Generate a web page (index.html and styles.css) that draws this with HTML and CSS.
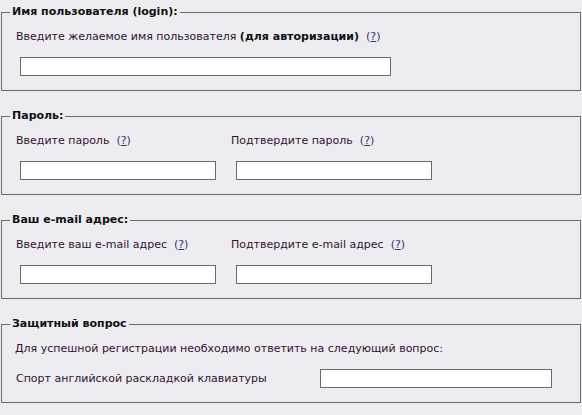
FILE: index.html
```html
<!DOCTYPE html>
<html lang="ru">
<head>
<meta charset="utf-8">
<title>Регистрация</title>
<link rel="stylesheet" href="styles.css">
</head>
<body>
<form class="form">
  <fieldset class="group">
    <legend class="legend">Имя пользователя (login):</legend>
    <div class="label">Введите желаемое имя пользователя <b>(для авторизации)</b><span class="help">(<u>?</u>)</span></div>
    <input class="field field-wide" type="text">
  </fieldset>

  <fieldset class="group">
    <legend class="legend">Пароль:</legend>
    <div class="cols">
      <div class="col">
        <div class="label">Введите пароль<span class="help">(<u>?</u>)</span></div>
        <input class="field field-half" type="password">
      </div>
      <div class="col">
        <div class="label">Подтвердите пароль<span class="help">(<u>?</u>)</span></div>
        <input class="field field-half" type="password">
      </div>
    </div>
  </fieldset>

  <fieldset class="group">
    <legend class="legend">Ваш e-mail адрес:</legend>
    <div class="cols">
      <div class="col">
        <div class="label">Введите ваш e-mail адрес<span class="help">(<u>?</u>)</span></div>
        <input class="field field-half" type="text">
      </div>
      <div class="col">
        <div class="label">Подтвердите e-mail адрес<span class="help">(<u>?</u>)</span></div>
        <input class="field field-half" type="text">
      </div>
    </div>
  </fieldset>

  <fieldset class="group">
    <legend class="legend">Защитный вопрос</legend>
    <div class="label label-q">Для успешной регистрации необходимо ответить на следующий вопрос:</div>
    <div class="qrow">
      <span class="qtext">Спорт английской раскладкой клавиатуры</span>
      <input class="field field-q" type="text">
    </div>
  </fieldset>
</form>
</body>
</html>
```

FILE: styles.css
```css
html, body {
  margin: 0;
  padding: 0;
  background: #ededf1;
}

body {
  font-family: "DejaVu Sans", Verdana, sans-serif;
  font-size: 11px;
  color: #331133;
}

.form {
  padding: 5px 1px 0 1px;
}

.group {
  margin: 0 0 18px 0;
  padding: 11px 0 14px 14px;
  border: 1px solid #6b6b6b;
  min-width: 0;
}

.legend {
  font-weight: bold;
  color: #111;
  padding: 0 2px;
  margin-left: -6px;
  line-height: 14px;
}

.label {
  line-height: 14px;
  height: 14px;
  white-space: nowrap;
}

.label b {
  color: #111;
}

.help {
  margin-left: 7px;
  color: #33336a;
}

.help u {
  text-decoration: underline;
}

.field {
  display: block;
  box-sizing: border-box;
  height: 19px;
  margin: 13px 0 0 4px;
  padding: 0;
  border: 1px solid #6b6b6b;
  background: #fff;
  font: inherit;
}

.field-wide {
  width: 371px;
}

.cols {
  display: grid;
  grid-template-columns: 215px 215px;
}

.cols .col + .col .field {
  margin-left: 5px;
}

.field-half {
  width: 196px;
}

.label-q {
  margin-left: -1px;
}

.qrow {
  display: grid;
  grid-template-columns: 304px auto;
  align-items: center;
  margin-top: 13px;
}

.qrow .field-q {
  margin: 0;
  width: 232px;
}
```
